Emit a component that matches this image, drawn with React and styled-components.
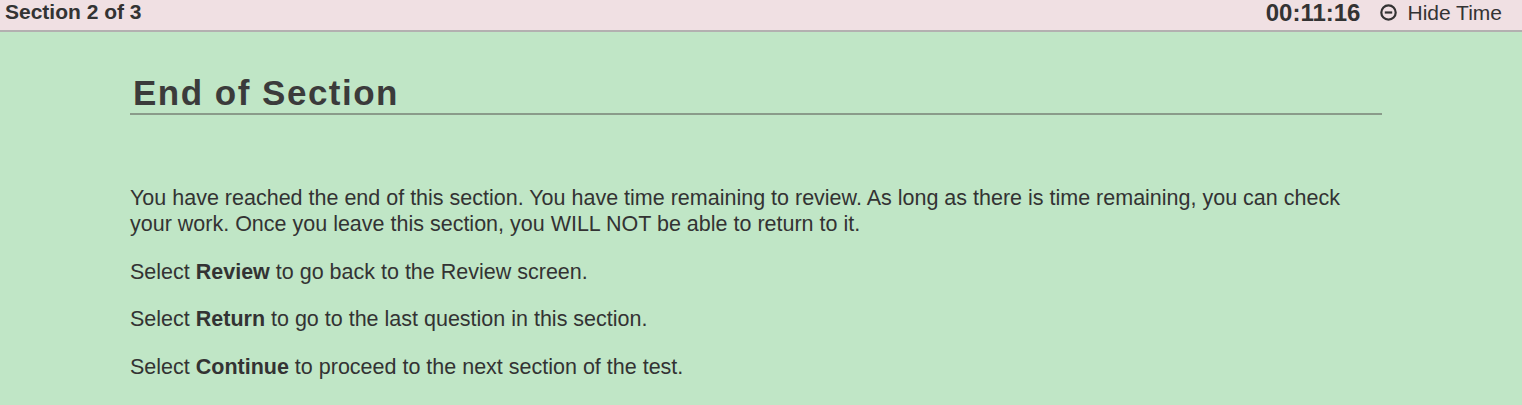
import React from "react";
import styled, { createGlobalStyle } from "styled-components";

const Global = createGlobalStyle`
  html, body { margin: 0; padding: 0; background: #c0e6c6; }
  body { font-family: "Liberation Sans", Arial, sans-serif; color: #333; }
`;

const TopBar = styled.header`
  box-sizing: border-box;
  display: flex;
  align-items: center;
  justify-content: space-between;
  height: 32px;
  background: #f0e0e3;
  border-bottom: 2px solid #b3b0b0;
  padding: 0 20px 5px 5px;
`;

const SectionLabel = styled.div`
  font-weight: bold;
  font-size: 21px;
  line-height: 24px;
  color: #333;
  margin-top: -2px;
`;

const TimeBox = styled.div`
  display: flex;
  align-items: center;
  gap: 20px;
`;

const Clock = styled.span`
  font-weight: bold;
  font-size: 24px;
  line-height: 26px;
  color: #333;
`;

const HideButton = styled.button`
  display: flex;
  align-items: center;
  gap: 10px;
  background: none;
  border: none;
  padding: 0;
  font-family: inherit;
  font-size: 21px;
  line-height: 24px;
  color: #333;
  cursor: pointer;
`;

const Main = styled.main`
  padding: 41px 140px 0 130px;
`;

const Heading = styled.h1`
  margin: 0;
  padding: 0 0 0 3px;
  font-size: 35px;
  line-height: 40px;
  font-weight: bold;
  letter-spacing: 1.5px;
  color: #3b3b3b;
  border-bottom: 2px solid #8a9b8a;
`;

const Body = styled.div`
  padding-top: 70px;
`;

const Para = styled.p`
  margin: 0 0 21.5px;
  font-size: 21.5px;
  line-height: 26px;
  color: #333;
`;

const MinusIcon = () => (
  <svg width="17" height="17" viewBox="0 0 17 17">
    <circle cx="8.5" cy="8.5" r="7.2" fill="none" stroke="#333" strokeWidth="2.2" />
    <rect x="4.8" y="7.4" width="7.4" height="2.2" fill="#333" />
  </svg>
);

export default function App() {
  return (
    <>
      <Global />
      <TopBar>
        <SectionLabel>Section 2 of 3</SectionLabel>
        <TimeBox>
          <Clock>00:11:16</Clock>
          <HideButton>
            <MinusIcon />
            Hide Time
          </HideButton>
        </TimeBox>
      </TopBar>
      <Main>
        <Heading>End of Section</Heading>
        <Body>
          <Para>
            You have reached the end of this section. You have time remaining to review. As long as there is time remaining, you can check your work. Once you leave this section, you WILL NOT be able to return to it.
          </Para>
          <Para>
            Select <b>Review</b> to go back to the Review screen.
          </Para>
          <Para>
            Select <b>Return</b> to go to the last question in this section.
          </Para>
          <Para>
            Select <b>Continue</b> to proceed to the next section of the test.
          </Para>
        </Body>
      </Main>
    </>
  );
}
